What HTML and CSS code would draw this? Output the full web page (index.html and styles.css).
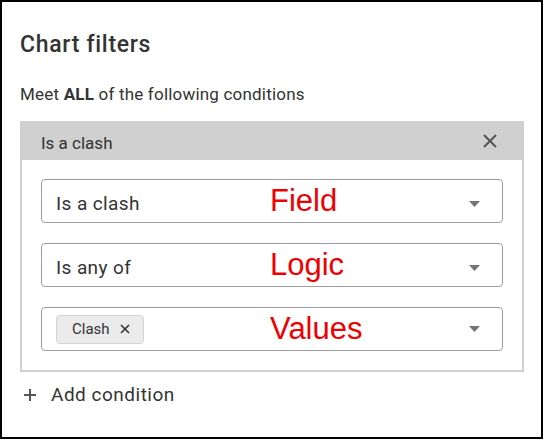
FILE: index.html
```html
<!DOCTYPE html>
<html>
<head>
<meta charset="utf-8">
<link rel="stylesheet" href="styles.css">
</head>
<body>
<div class="frame">
  <h1 class="title">Chart filters</h1>
  <p class="meet">Meet <b>ALL</b> of the following conditions</p>
  <div class="card">
    <div class="card-head">
      <span class="head-text">Is a clash</span>
      <svg class="close" width="14" height="14" viewBox="0 0 14 14"><path d="M1 1L13 13M13 1L1 13" stroke="#555" stroke-width="2" fill="none"/></svg>
    </div>
    <div class="card-body">
      <div class="select">
        <span class="value">Is a clash</span>
        <span class="note">Field</span>
        <svg class="arrow" width="11" height="6" viewBox="0 0 11 6"><path d="M0 0H11L5.5 6Z" fill="#757575"/></svg>
      </div>
      <div class="select">
        <span class="value">Is any of</span>
        <span class="note">Logic</span>
        <svg class="arrow" width="11" height="6" viewBox="0 0 11 6"><path d="M0 0H11L5.5 6Z" fill="#757575"/></svg>
      </div>
      <div class="select chips">
        <span class="chip">Clash
          <svg class="chip-x" width="10" height="10" viewBox="0 0 10 10"><path d="M1 1L9 9M9 1L1 9" stroke="#333" stroke-width="1.6" fill="none"/></svg>
        </span>
        <span class="note">Values</span>
        <svg class="arrow" width="11" height="6" viewBox="0 0 11 6"><path d="M0 0H11L5.5 6Z" fill="#757575"/></svg>
      </div>
    </div>
  </div>
  <div class="add">
    <svg class="plus" width="12" height="12" viewBox="0 0 12 12"><path d="M6 0V12M0 6H12" stroke="#555" stroke-width="2" fill="none"/></svg>
    <span>Add condition</span>
  </div>
</div>
</body>
</html>
```
FILE: styles.css
```css
html, body {
  margin: 0;
  padding: 0;
  background: #fff;
}
.frame {
  box-sizing: border-box;
  width: 543px;
  height: 439px;
  border: 2px solid #000;
  padding: 0 0 0 18px;
  font-family: Roboto, "Liberation Sans", sans-serif;
  color: #333;
}
.title {
  margin: 31px 0 0;
  font-size: 23px;
  line-height: 24px;
  font-weight: 500;
  letter-spacing: 0.7px;
}
.meet {
  margin: 27px 0 0;
  font-size: 17px;
  line-height: 20px;
  letter-spacing: 0.2px;
}
.meet b {
  font-weight: 700;
}
.card {
  box-sizing: border-box;
  width: 504px;
  margin-top: 17px;
  border: 2px solid #d0d0d0;
  border-top: 0;
}
.card-head {
  display: flex;
  align-items: center;
  justify-content: space-between;
  height: 39px;
  box-sizing: border-box;
  margin: 0 -2px;
  padding: 0 27px 0 21px;
  background: #d0d0d0;
  font-size: 17px;
  line-height: 20px;
}
.head-text {
  padding-top: 5px;
}
.card-body {
  display: flex;
  flex-direction: column;
  gap: 20px;
  padding: 19px;
}
.select {
  position: relative;
  box-sizing: border-box;
  height: 44px;
  display: flex;
  align-items: center;
  padding: 5px 22px 0 14px;
  border: 1px solid #9e9e9e;
  border-radius: 4px;
  font-size: 19px;
  letter-spacing: 0.4px;
}
.select.chips {
  padding-top: 0;
}
.value {
  flex: 1;
}
.note {
  position: absolute;
  left: 228px;
  top: 50%;
  transform: translateY(-50%);
  font-family: "Liberation Sans", Arial, sans-serif;
  font-size: 31px;
  letter-spacing: 0;
  color: #ee0000;
}
.arrow {
  margin-left: auto;
}
.chip {
  box-sizing: border-box;
  display: inline-flex;
  align-items: center;
  gap: 10px;
  height: 29px;
  padding: 0 13px 0 15px;
  background: #ebebeb;
  border: 1px solid #d4d4d4;
  border-radius: 4px;
  font-size: 15px;
  letter-spacing: 0;
}
.add {
  display: flex;
  align-items: center;
  gap: 15px;
  margin-top: 11px;
  padding-left: 4px;
  font-size: 19px;
  line-height: 24px;
  letter-spacing: 0.5px;
}
```
